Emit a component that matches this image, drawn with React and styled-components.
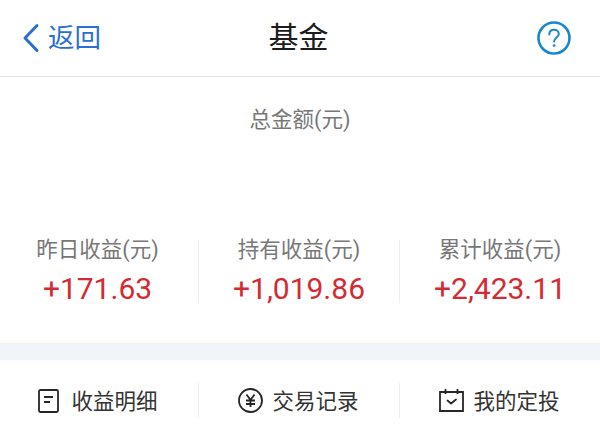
import React from "react";
import styled, { createGlobalStyle } from "styled-components";

const Global = createGlobalStyle`
  html, body { margin: 0; padding: 0; background: #fff; }
  body { font-family: Roboto, "Noto Sans CJK SC", sans-serif; }
`;
const Page = styled.div`
  width: 600px; height: 443px; overflow: hidden; display: flex; flex-direction: column; background: #fff;
`;
const Header = styled.header`
  height: 75px; flex: none; display: grid; grid-template-columns: 1fr auto 1fr; align-items: center;
  border-bottom: 1px solid #e2e4e3; padding: 0 29px 1px 22px; box-sizing: content-box;
`;
const Back = styled.div`
  display: flex; align-items: center; gap: 8px; color: #2a6fd0; font-size: 26.5px; line-height: 30px;
`;
const Title = styled.h1`
  margin: 0; font-size: 30px; font-weight: 400; color: #1c1c1c; line-height: 36px; padding-left: 4px;
`;
const Help = styled.div`
  justify-self: end; display: flex;
`;
const Total = styled.section`
  height: 163px; flex: none; display: flex; justify-content: center; padding-top: 30px; box-sizing: border-box;
`;
const Label = styled.div`
  font-size: 21.500px; line-height: 26px; color: #777;
`;
const StatLabel = styled(Label)`
  line-height: 20px;
`;
const Stats = styled.section`
  flex: none; height: 103px; display: grid; grid-template-columns: 198px 201px 201px; align-items: start;
`;
const Stat = styled.div`
  height: 63px; display: flex; flex-direction: column; align-items: center;
  border-left: ${p => (p.$first ? "none" : "1px solid #eeeeee")};
  padding-right: ${p => (p.$first ? 3 : 0)}px;
  box-sizing: border-box;
`;
const Amount = styled.div`
  font-size: 30px; line-height: 36px; color: #d42a31; margin-top: 11px;
`;
const Band = styled.div`
  flex: none; height: 17px; background: #f1f4f8; box-shadow: 0 -3px 3px #fbfdf5, 0 3px 3px #fcfef8;
`;
const Actions = styled.nav`
  flex: 1; display: grid; grid-template-columns: 198px 201px 201px; padding-top: 23px; align-items: start;
`;
const Action = styled.div`
  height: 35px; display: flex; align-items: center; justify-content: center; gap: ${p => p.$gap}px;
  border-left: ${p => (p.$first ? "none" : "1px solid #eeeeee")};
  padding-right: ${p => (p.$first ? 2 : 1)}px;
  font-size: 21.500px; color: #333; box-sizing: border-box;
`;
const ActionText = styled.span`
  position: relative; top: -1px;
`;

const Chevron = () => (
  <svg width="18" height="30" viewBox="0 0 18 30" fill="none" stroke="#2a6fd0" strokeWidth="3" strokeLinecap="round" strokeLinejoin="round">
    <path d="M15 2.500 3 15l12 12.500" />
  </svg>
);
const Question = () => (
  <svg width="34" height="34" viewBox="0 0 34 34" fill="none" stroke="#1b87cb">
    <circle cx="17" cy="17" r="15.500" strokeWidth="2.600" />
    <path d="M12.300 13.400c0-2.900 2.100-4.600 4.800-4.600s4.700 1.700 4.700 4.100c0 3.500-4.700 3.700-4.700 7.700" strokeWidth="2" strokeLinecap="round" />
    <circle cx="17.100" cy="24.600" r="1.400" fill="#1b87cb" stroke="none" />
  </svg>
);
const Doc = () => (
  <svg width="21" height="24" viewBox="0 0 21 24" fill="none" stroke="#262626" strokeWidth="1.800" strokeLinejoin="round">
    <rect x="1" y="1" width="19" height="22" rx="1.500" />
    <path d="M6 8h9M6 13h6" />
  </svg>
);
const Yen = () => (
  <svg width="25" height="25" viewBox="0 0 25 25" fill="none" stroke="#262626" strokeWidth="1.800">
    <circle cx="12.500" cy="12.500" r="11.500" />
    <path d="m8.500 6.500 4 5.500 4-5.500M8 12.500h9M8 16h9M12.500 12v7" />
  </svg>
);
const Calendar = () => (
  <svg width="25" height="23" viewBox="0 0 25 23" fill="none" stroke="#262626" strokeWidth="1.800">
    <path d="M1 3h23v19H1zM6.500 0v5M18.500 0v5" />
    <path d="m8.500 11.500 3.500 3 5-4" strokeLinecap="round" strokeLinejoin="round" />
  </svg>
);

const stats = [
  ["昨日收益(元)", "+171.63"],
  ["持有收益(元)", "+1,019.86"],
  ["累计收益(元)", "+2,423.11"],
];

export default function App() {
  return (
    <Page>
      <Global />
      <Header>
        <Back><Chevron />返回</Back>
        <Title>基金</Title>
        <Help><Question /></Help>
      </Header>
      <Total><Label>总金额(元)</Label></Total>
      <Stats>
        {stats.map(([l, v], i) => (
          <Stat key={l} $first={i === 0}>
            <StatLabel>{l}</StatLabel>
            <Amount>{v}</Amount>
          </Stat>
        ))}
      </Stats>
      <Band />
      <Actions>
        <Action $first $gap={12}><Doc /><ActionText>收益明细</ActionText></Action>
        <Action $gap={9}><Yen /><ActionText>交易记录</ActionText></Action>
        <Action $gap={9}><Calendar /><ActionText>我的定投</ActionText></Action>
      </Actions>
    </Page>
  );
}
